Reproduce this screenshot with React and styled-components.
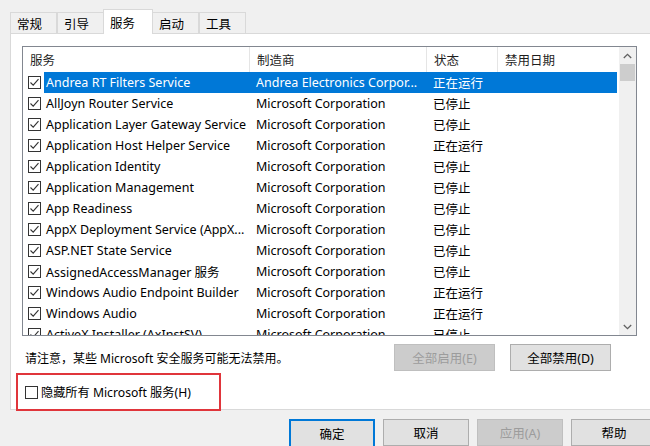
import React from 'react'
import styled, { createGlobalStyle } from 'styled-components'

const GlobalStyle = createGlobalStyle`
  body {
    margin: 0;
    background: #f0f0f0;
    font-family: "Noto Sans", "Noto Sans CJK SC", sans-serif;
    font-size: 12px;
    color: #000;
  }
`

const rows = [
  { name: 'Andrea RT Filters Service', maker: 'Andrea Electronics Corpor...', state: '正在运行', selected: true },
  { name: 'AllJoyn Router Service', maker: 'Microsoft Corporation', state: '已停止' },
  { name: 'Application Layer Gateway Service', maker: 'Microsoft Corporation', state: '已停止' },
  { name: 'Application Host Helper Service', maker: 'Microsoft Corporation', state: '正在运行' },
  { name: 'Application Identity', maker: 'Microsoft Corporation', state: '已停止' },
  { name: 'Application Management', maker: 'Microsoft Corporation', state: '已停止' },
  { name: 'App Readiness', maker: 'Microsoft Corporation', state: '已停止' },
  { name: 'AppX Deployment Service (AppX...', maker: 'Microsoft Corporation', state: '已停止' },
  { name: 'ASP.NET State Service', maker: 'Microsoft Corporation', state: '已停止' },
  { name: 'AssignedAccessManager 服务', maker: 'Microsoft Corporation', state: '已停止' },
  { name: 'Windows Audio Endpoint Builder', maker: 'Microsoft Corporation', state: '正在运行' },
  { name: 'Windows Audio', maker: 'Microsoft Corporation', state: '正在运行' },
  { name: 'ActiveX Installer (AxInstSV)', maker: 'Microsoft Corporation', state: '已停止' },
]

const tabs = ['常规', '引导', '服务', '启动', '工具']

export default function App() {
  return (
    <Window>
      <GlobalStyle />
      <TabStrip>
        {tabs.map(t => (
          <Tab key={t} active={t === '服务'}>{t}</Tab>
        ))}
      </TabStrip>
      <Panel>
        <ListBox>
          <Table>
            <HeaderRow>
              <HeadCell w={227}>服务</HeadCell>
              <HeadCell w={177}>制造商</HeadCell>
              <HeadCell w={71}>状态</HeadCell>
              <HeadCell w={119} last>禁用日期</HeadCell>
            </HeaderRow>
            {rows.map(r => (
              <Row key={r.name}>
                <NameCell>
                  <Check>
                    <CheckMark />
                  </Check>
                  <Label selected={r.selected}>{r.name}</Label>
                </NameCell>
                <Cell w={177} selected={r.selected}>{r.maker}</Cell>
                <Cell w={71} selected={r.selected}>{r.state}</Cell>
                <Cell w={119} selected={r.selected}></Cell>
              </Row>
            ))}
          </Table>
          <ScrollBar>
            <Arrow>
              <svg width="9" height="6" viewBox="0 0 9 6"><path d="M0.8 5 L4.5 1.3 L8.2 5" fill="none" stroke="#606060" strokeWidth="1.3" /></svg>
            </Arrow>
            <Thumb />
            <Track />
            <Arrow>
              <svg width="9" height="6" viewBox="0 0 9 6"><path d="M0.8 1 L4.5 4.7 L8.2 1" fill="none" stroke="#606060" strokeWidth="1.3" /></svg>
            </Arrow>
          </ScrollBar>
        </ListBox>
        <Actions>
          <Note>请注意，某些 Microsoft 安全服务可能无法禁用。</Note>
          <Button w={101} disabled>全部启用(E)</Button>
          <Button w={101}>全部禁用(D)</Button>
        </Actions>
        <HideRow>
          <Box />
          <span>隐藏所有 Microsoft 服务(H)</span>
        </HideRow>
      </Panel>
      <Footer>
        <Button w={86} primary>确定</Button>
        <Button w={86}>取消</Button>
        <Button w={86} disabled>应用(A)</Button>
        <Button w={86}>帮助</Button>
      </Footer>
    </Window>
  )
}

const Window = styled.div`
  width: 650px;
  height: 446px;
  overflow: hidden;
  padding-top: 9px;
  box-sizing: border-box;
`

const TabStrip = styled.div`
  display: flex;
  align-items: flex-end;
  margin-left: 10px;
  height: 24px;
  position: relative;
  z-index: 1;
`

const Tab = styled.div`
  width: ${p => (p.active ? 50 : 47)}px;
  height: ${p => (p.active ? 25 : 21)}px;
  box-sizing: border-box;
  border: 1px solid #d9d9d9;
  border-bottom: none;
  margin-left: ${p => (p.active ? -1 : 0)}px;
  margin-right: ${p => (p.active ? -1 : 0)}px;
  margin-bottom: ${p => (p.active ? -1 : 0)}px;
  background: ${p => (p.active ? '#fff' : '#f0f0f0')};
  padding-left: 6px;
  display: flex;
  align-items: center;
  font-family: "Noto Sans CJK SC", sans-serif;
  font-size: 12.5px;
  position: relative;
  z-index: ${p => (p.active ? 2 : 1)};
  & + & {
    border-left: ${p => (p.active ? '1px solid #d9d9d9' : 'none')};
  }
`

const Panel = styled.div`
  margin-left: 10px;
  width: 660px;
  height: 377px;
  box-sizing: border-box;
  background: #fff;
  border: 1px solid #d9d9d9;
  padding: 12px 0 0 11px;
`

const ListBox = styled.div`
  display: flex;
  width: 615px;
  height: 290px;
  box-sizing: border-box;
  border: 1px solid #828790;
  overflow: hidden;
`

const Table = styled.div`
  flex: 1;
  overflow: hidden;
`

const HeaderRow = styled.div`
  display: flex;
  height: 25px;
`

const HeadCell = styled.div`
  width: ${p => p.w}px;
  box-sizing: border-box;
  padding-left: 7px;
  display: flex;
  align-items: center;
  border-right: ${p => (p.last ? 'none' : '1px solid #e5e5e5')};
  color: #1e1e1e;
  font-family: "Noto Sans CJK SC", sans-serif;
  font-size: 12.5px;
`

const Row = styled.div`
  display: flex;
  height: 21px;
  align-items: stretch;
  white-space: nowrap;
  font-size: 12.5px;
`

const NameCell = styled.div`
  width: 227px;
  display: flex;
  align-items: center;
  padding-left: 5px;
  box-sizing: border-box;
`

const Check = styled.div`
  width: 13px;
  height: 13px;
  box-sizing: border-box;
  border: 1px solid #333;
  background: #fff;
  display: flex;
  align-items: center;
  justify-content: center;
  flex: none;
`

const CheckMark = () => (
  <svg width="11" height="11" viewBox="0 0 11 11">
    <path d="M1.5 5.5 L4.2 8.2 L9.5 2.2" fill="none" stroke="#333" strokeWidth="1.1" />
  </svg>
)

const Label = styled.div`
  flex: 1;
  height: 100%;
  margin-left: 3px;
  padding-left: 2px;
  display: flex;
  align-items: center;
  overflow: hidden;
  background: ${p => (p.selected ? '#0078d7' : 'transparent')};
  color: ${p => (p.selected ? '#fff' : '#000')};
`

const Cell = styled.div`
  width: ${p => p.w}px;
  box-sizing: border-box;
  padding-left: 6px;
  display: flex;
  align-items: center;
  overflow: hidden;
  background: ${p => (p.selected ? '#0078d7' : 'transparent')};
  color: ${p => (p.selected ? '#fff' : '#000')};
`

const ScrollBar = styled.div`
  width: 17px;
  background: #f0f0f0;
  display: flex;
  flex-direction: column;
  flex: none;
`

const Arrow = styled.div`
  height: 17px;
  display: flex;
  align-items: center;
  justify-content: center;
  flex: none;
`

const Thumb = styled.div`
  height: 17px;
  margin: 0 1px;
  background: #cdcdcd;
  flex: none;
`

const Track = styled.div`
  flex: 1;
`

const Actions = styled.div`
  display: flex;
  align-items: center;
  gap: 15px;
  width: 615px;
  padding-right: 26px;
  box-sizing: border-box;
  margin-top: 8px;
  height: 27px;
  font-size: 12.5px;
`

const Note = styled.div`
  flex: 1;
  padding-left: 3px;
  font-size: 12px;
`

const Button = styled.div`
  width: ${p => p.w}px;
  height: ${p => (p.primary ? 29 : 27)}px;
  box-sizing: border-box;
  flex: none;
  display: flex;
  align-items: center;
  justify-content: center;
  background: ${p => (p.disabled ? '#cccccc' : '#e1e1e1')};
  color: ${p => (p.disabled ? '#9c9c9c' : '#000')};
  border: ${p => (p.primary ? '2px solid #0078d7' : p.disabled ? '1px solid #bfbfbf' : '1px solid #adadad')};
`

const HideRow = styled.div`
  margin-top: 2px;
  margin-left: -6px;
  width: 205px;
  height: 38px;
  box-sizing: border-box;
  border: 2px solid #e0353b;
  display: flex;
  align-items: center;
  padding-left: 7px;
  gap: 3px;
  font-size: 12.2px;
`

const Box = styled.div`
  width: 13px;
  height: 13px;
  box-sizing: border-box;
  border: 1px solid #333;
  background: #fff;
`

const Footer = styled.div`
  display: flex;
  gap: 8px;
  padding-left: 289px;
  margin-top: 9px;
  font-size: 12.5px;
`
